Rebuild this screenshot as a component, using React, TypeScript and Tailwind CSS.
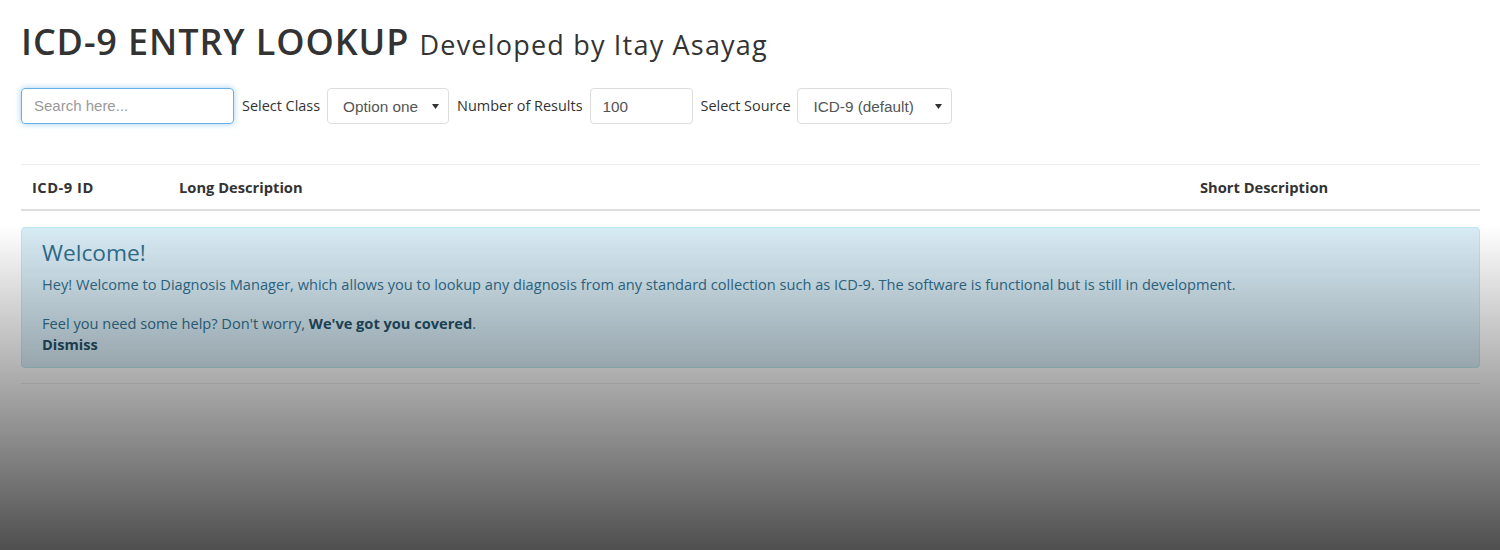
import React from "react"

const sans = "font-['Open_Sans','Noto_Sans',sans-serif]"

function Caret() {
  return (
    <svg width="7" height="5" viewBox="0 0 7 5" className="absolute right-[9px] top-[15px]">
      <path d="M0 0 L7 0 L3.5 5 Z" fill="#333" />
    </svg>
  )
}

export default function App() {
  return (
    <div className={`relative min-h-[550px] bg-white text-[#333] ${sans}`}>
      <div className="px-[21px] pr-[20px]">
        <h1 className="pt-[22px] pb-[26px] text-[36px] leading-[1.1] font-semibold tracking-[0.9px]">
          ICD-9 ENTRY LOOKUP{" "}
          <span className="text-[27px] font-normal tracking-[1.2px]">Developed by Itay Asayag</span>
        </h1>

        <div className="flex items-center text-[15px] font-['Liberation_Sans',Arial,sans-serif]">
          <input
            className="h-[36px] w-[213px] rounded-[4px] border border-[#66afe9] px-[12px] text-[15px] text-[#555] shadow-[0_0_6px_rgba(102,175,233,0.6)] outline-none placeholder:text-[#999]"
            placeholder="Search here..."
          />
          <span className={`ml-[8px] mr-[7px] text-[14.45px] text-[#333] ${sans}`}>Select Class</span>
          <div className="relative h-[36px] w-[122px] rounded-[4px] border border-[#ddd] pl-[15px] pt-[7px] text-[15.3px] text-[#555]">
            Option one
            <Caret />
          </div>
          <span className={`ml-[8px] mr-[7px] text-[14.45px] text-[#333] ${sans}`}>Number of Results</span>
          <div className="h-[36px] w-[103px] rounded-[4px] border border-[#ddd] pl-[12px] pt-[7px] text-[15.3px] text-[#555]">100</div>
          <span className={`ml-[8px] mr-[7px] text-[14.45px] text-[#333] ${sans}`}>Select Source</span>
          <div className="relative h-[36px] w-[155px] rounded-[4px] border border-[#ddd] pl-[15px] pt-[7px] text-[15.3px] text-[#555]">
            ICD-9 (default)
            <Caret />
          </div>
        </div>

        <div className="mt-[40px] border-t border-[#eee]">
          <div className="flex h-[46px] items-center border-b-2 border-[#ddd] text-[14.7px] font-bold">
            <div className="w-[158px] pl-[11px] tracking-[0.5px]">ICD-9 ID</div>
            <div className="flex-1">Long Description</div>
            <div className="w-[280px]">Short Description</div>
          </div>
        </div>

        <div className="mt-[16px] rounded-[4px] border border-[#bce8f1] bg-[#d9edf7] px-[20px] pt-[11px] pb-[12px] text-[#31708f] text-[14.6px]">
          <h4 className="text-[22.7px] leading-[1.2] font-normal">Welcome!</h4>
          <p className="mt-[8px] leading-[20px]">
            Hey! Welcome to Diagnosis Manager, which allows you to lookup any diagnosis from any standard collection such as ICD-9. The software is functional but is still in development.
          </p>
          <p className="mt-[19px] leading-[20px]">
            Feel you need some help? Don't worry, <b className="text-[#245269]">We've got you covered</b>.
          </p>
          <p className="leading-[22px] font-bold text-[#245269]">Dismiss</p>
        </div>

        <hr className="mt-[15px] border-t border-[#eee]" />
      </div>

      <div className="pointer-events-none fixed inset-0 bg-[linear-gradient(to_bottom,rgba(0,0,0,0)_225px,rgba(0,0,0,0.69)_550px)]" />
    </div>
  )
}
